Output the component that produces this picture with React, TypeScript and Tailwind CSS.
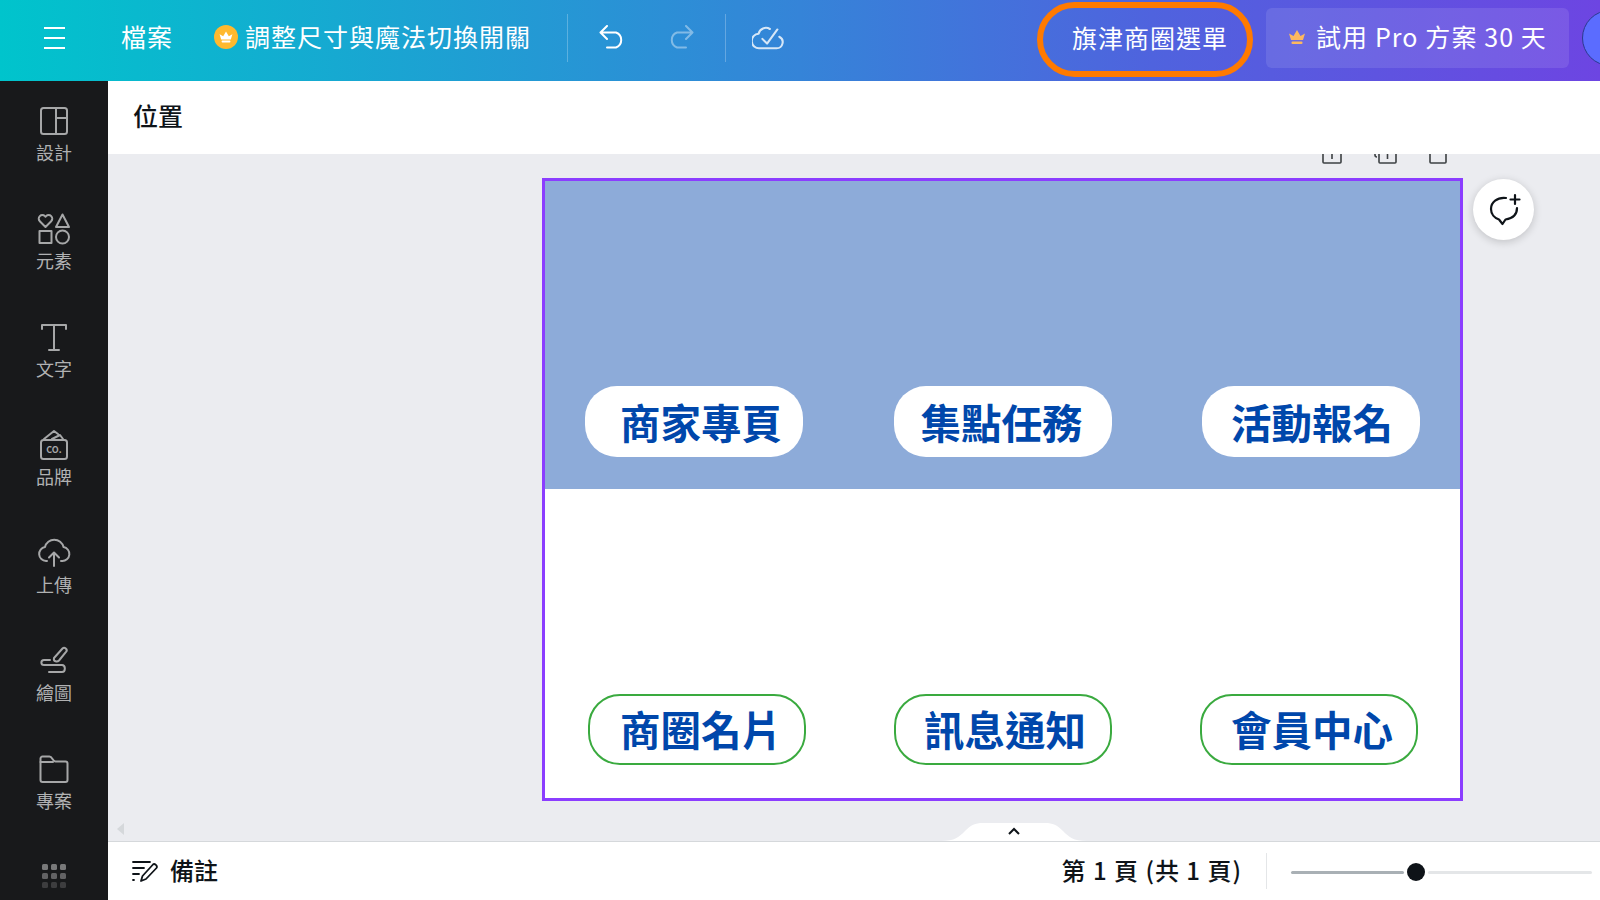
const navItems = [
  { label: "設計", icon: "layout" },
  { label: "元素", icon: "shapes" },
  { label: "文字", icon: "text" },
  { label: "品牌", icon: "brand" },
  { label: "上傳", icon: "upload" },
  { label: "繪圖", icon: "draw" },
  { label: "專案", icon: "folder" },
];

const NavIcon = ({ name }: { name: string }) => {
  const common = {
    width: 34,
    height: 34,
    viewBox: "0 0 34 34",
    fill: "none",
    stroke: "#a6a7a8",
    strokeWidth: 2,
    strokeLinecap: "round" as const,
    strokeLinejoin: "round" as const,
  };
  if (name === "layout")
    return (
      <svg {...common}>
        <rect x="4" y="4" width="26" height="26" rx="2.5" />
        <path d="M19 4v26M19 14h11" />
      </svg>
    );
  if (name === "shapes")
    return (
      <svg {...common}>
        <path d="M8.500 15 2.800 9.200a3.600 3.600 0 0 1 5.100-5.100l.6.6.6-.6a3.600 3.600 0 0 1 5.100 5.100z" />
        <path d="M25.500 2.500 32 15H19z" />
        <rect x="2.500" y="19" width="12" height="12" />
        <circle cx="25.500" cy="25" r="6.500" />
      </svg>
    );
  if (name === "text")
    return (
      <svg {...common}>
        <path d="M5 9V5h24v4M17 5v25M12 30h10" />
      </svg>
    );
  if (name === "brand")
    return (
      <svg {...common}>
        <rect x="4" y="12" width="26" height="19" rx="2.5" />
        <path d="M7 11 17 3l4 3M15 11l8-4 3 4" />
        <text x="17" y="25" textAnchor="middle" fontSize="9" fontWeight="700" fill="#a6a7a8" stroke="none">CO.</text>
      </svg>
    );
  if (name === "upload")
    return (
      <svg {...common}>
        <path d="M10 25H9a7 7 0 0 1-1-13.9 9.5 9.5 0 0 1 18.5 0A7 7 0 0 1 25 25h-1" />
        <path d="M17 30V17M12 21.5l5-5 5 5" />
      </svg>
    );
  if (name === "draw")
    return (
      <svg {...common}>
        <path d="m17 14 8.5-9.5c2-2 5.500.8 3.700 3.200L22 16.500c-1.500 1.500-6 1.500-5-2.500z" />
        <path d="M13 14H7c-3.500 0-3.500 5 0 5h18c3.800 0 3.800 7 0 7H12" transform="translate(0 2)" />
      </svg>
    );
  return (
    <svg {...common}>
      <path d="M3.500 9V6.500a2 2 0 0 1 2-2h7c1.500 0 2 .8 3 2.500s1.500 2.500 3 2.500h10a2 2 0 0 1 2 2V28a2 2 0 0 1-2 2h-23a2 2 0 0 1-2-2z" />
      <path d="M3.500 10H16" />
    </svg>
  );
};

const CrownGlyph = ({ color, size }: { color: string; size: number }) => (
  <svg width={size} height={size} viewBox="0 0 20 20" fill={color}>
    <path d="M4 13 2 6.500l4.500 2.500L10 3l3.500 6L18 6.500 16 13z" />
    <rect x="4.500" y="14.500" width="11" height="2.500" rx="1" />
  </svg>
);

const Pill = ({ label, outlined, pad }: { label: string; outlined?: boolean; pad: string }) => (
  <div
    className={`flex h-[71px] w-[218px] items-center rounded-[32px] text-[40.5px] leading-none font-bold text-[#0047ab] ${pad} ${
      outlined ? "border-2 border-[#3aaa3f] bg-white" : "bg-white pt-[2px]"
    }`}
  >
    {label}
  </div>
);

export default function App() {
  return (
    <div className="flex h-[900px] w-[1600px] flex-col overflow-hidden bg-[#ebecf0] font-['Noto_Sans_CJK_TC','Noto_Sans',sans-serif]">
      <header className="flex h-[81px] shrink-0 items-center overflow-hidden bg-[linear-gradient(90deg,#00c4cc_0%,#3584d8_50%,#4f63de_72%,#6d45e2_100%)] pb-[8px] text-[25px] tracking-[1px] text-white">
        <div className="mt-[2px] flex w-[108px] shrink-0 flex-col items-center gap-[8px]">
          <span className="h-[2px] w-[21px] bg-white" />
          <span className="h-[2px] w-[21px] bg-white" />
          <span className="h-[2px] w-[21px] bg-white" />
        </div>
        <span className="ml-[13px]">檔案</span>
        <div className="ml-[41px] flex h-[24px] w-[24px] items-center justify-center rounded-full bg-[#ffb92e]">
          <CrownGlyph color="#ffffff" size={16} />
        </div>
        <span className="ml-[7px]">調整尺寸與魔法切換開關</span>
        <div className="mt-[2px] ml-[36px] h-[48px] w-px bg-white/25" />
        <svg className="ml-[31px]" width="28" height="24" viewBox="0 0 28 24" fill="none" stroke="#ffffff" strokeWidth="2" strokeLinecap="round" strokeLinejoin="round">
          <path d="M8 1 1.500 7.500 8 14M2 7.500h15a8 8 0 0 1 0 15H8" />
        </svg>
        <svg className="ml-[39px] opacity-40" width="28" height="24" viewBox="0 0 28 24" fill="none" stroke="#ffffff" strokeWidth="2" strokeLinecap="round" strokeLinejoin="round">
          <path d="M20 1l6.500 6.500L20 14M26 7.500H11a8 8 0 0 0 0 15h9" />
        </svg>
        <div className="mt-[2px] ml-[31px] h-[48px] w-px bg-white/25" />
        <svg className="ml-[26px]" width="32" height="28" viewBox="0 0 34 28" fill="none" stroke="#ffffff" strokeOpacity="0.8" strokeWidth="2.200" strokeLinecap="round" strokeLinejoin="round">
          <path d="M19 5.500A8 8 0 0 0 7 10.500 7.500 7.500 0 0 0 8 26h18a6.500 6.500 0 0 0 3-12.300" />
          <path d="m11 16 5 5 11-15" />
        </svg>
        <div className="mt-[2px] ml-auto flex h-[75px] w-[216px] shrink-0 items-center justify-center self-start rounded-full border-[6px] border-[#ff7a00] pb-[4px] pl-[10px] tracking-[1px]">
          旗津商圈選單
        </div>
        <div className="mt-[8px] ml-[13px] flex h-[60px] w-[303px] shrink-0 items-center self-start rounded-[6px] bg-white/10 pb-[2px] pl-[21px] tracking-[1.1px]">
          <CrownGlyph color="#fdb85f" size={20} />
          <span className="ml-[9px] whitespace-nowrap">試用 Pro 方案 30 天</span>
        </div>
        <div className="mt-[10px] mr-[-38px] ml-[13px] h-[56px] w-[56px] shrink-0 self-start rounded-full border border-[#2b3a8f] bg-[#5b6cff]" />
      </header>

      <div className="flex min-h-0 flex-1">
        <aside className="flex w-[108px] shrink-0 flex-col bg-[#18191b]">
          {navItems.map((item) => (
            <div key={item.label} className="flex h-[108px] shrink-0 flex-col items-center pt-[23px]">
              <NavIcon name={item.icon} />
              <span className="mt-[2px] text-[18px] leading-[24px] text-[#b0b1b2]">{item.label}</span>
            </div>
          ))}
          <div className="mt-[27px] grid w-[24px] grid-cols-3 gap-[3px] self-center">
            {[0.42, 0.42, 0.42, 0.32, 0.32, 0.32, 0.16, 0.16, 0.16].map((o, i) => (
              <span key={i} className="h-[6px] w-[6px] rounded-[1.500px] bg-white" style={{ opacity: o }} />
            ))}
          </div>
        </aside>

        <main className="flex min-w-0 flex-1 flex-col">
          <div className="flex h-[73px] shrink-0 items-center bg-white pb-[3px] pl-[25px] text-[25px] font-medium text-[#0e1318]">位置</div>

          <div className="relative min-h-0 flex-1 bg-[#ebecf0]">
            <div className="relative ml-[434px] w-[921px]">
              <div className="flex h-[10px] items-end justify-end gap-[32px] overflow-hidden pr-[16px]">
                <svg width="20" height="10" viewBox="0 0 20 10" fill="none" stroke="#3c4043" strokeWidth="1.600">
                  <path d="M1 0v8a1 1 0 0 0 1 1h16a1 1 0 0 0 1-1V0M10 0v5" />
                </svg>
                <svg width="23" height="10" viewBox="0 0 23 10" fill="none" stroke="#3c4043" strokeWidth="1.600">
                  <path d="M1 0v1a2 2 0 0 0 2 2M5 0v8a1 1 0 0 0 1 1h15a1 1 0 0 0 1-1V0M13.500 0v5" />
                </svg>
                <svg width="18" height="10" viewBox="0 0 18 10" fill="none" stroke="#3c4043" strokeWidth="1.600">
                  <path d="M1 0v8a1 1 0 0 0 1 1h14a1 1 0 0 0 1-1V0" />
                </svg>
              </div>

              <section className="mt-[14px] flex h-[623px] flex-col border-[3px] border-[#8b3dff] bg-white">
                <div className="flex h-[308px] shrink-0 items-end justify-between bg-[#8dabd9] pr-[40px] pb-[32px] pl-[40px]">
                  <Pill label="商家專頁" pad="pl-[35px]" />
                  <Pill label="集點任務" pad="pl-[27px]" />
                  <Pill label="活動報名" pad="pl-[29px]" />
                </div>
                <div className="flex flex-1 items-end justify-between pr-[42px] pb-[33px] pl-[43px]">
                  <Pill label="商圈名片" outlined pad="pl-[30px]" />
                  <Pill label="訊息通知" outlined pad="pl-[28px]" />
                  <Pill label="會員中心" outlined pad="pl-[29px]" />
                </div>
              </section>

              <button className="absolute top-[25px] right-[-71px] flex h-[61px] w-[61px] items-center justify-center rounded-full bg-white shadow-[0_2px_8px_rgba(0,0,0,0.18)]">
                <svg width="34" height="34" viewBox="0 0 34 34" fill="none" stroke="#0e1318" strokeWidth="2.200" strokeLinecap="round" strokeLinejoin="round">
                  <path d="M19 5C10 4 4 9.500 4 16c0 5 3.500 9 8 10.500l3.500 4.500 3-4.500C25 25.500 30 22 30 15" />
                  <path d="M28 2v9M23.500 6.500h9" />
                </svg>
              </button>
            </div>

            <svg className="absolute bottom-[6px] left-[9px]" width="8" height="12" viewBox="0 0 8 12" fill="#d5d8db">
              <path d="M7 0v12L0 6z" />
            </svg>

            <svg className="absolute right-[513px] bottom-0" width="146" height="18" viewBox="0 0 146 18" fill="#ffffff">
              <path d="M0 18c14 0 18-4 24-10C30 2 34 0 42 0h62c8 0 12 2 18 8 6 6 10 10 24 10z" />
              <path d="m68 11 5-5 5 5" fill="none" stroke="#0e1318" strokeWidth="2" />
            </svg>
          </div>

          <footer className="flex h-[59px] shrink-0 items-center border-t border-[#d5d8db] bg-white pl-[24px] text-[#0e1318]">
            <svg width="28" height="24" viewBox="0 0 28 24" fill="none" stroke="#0e1318" strokeWidth="1.800" strokeLinecap="round" strokeLinejoin="round">
              <path d="M1 3h17M1 9h11M1 15h6M1 21h1" />
              <path d="m9 22 1.500-5L21 5.500c1.500-1.500 5 1.500 3.500 3.500L14 20z" />
            </svg>
            <span className="ml-[10px] pb-[3px] text-[24px] font-medium">備註</span>
            <span className="ml-auto pb-[2px] text-[24px] font-medium tracking-[1px]">第 1 頁 (共 1 頁)</span>
            <div className="ml-[24px] h-[36px] w-px bg-[#e4e6e8]" />
            <div className="mt-[2px] ml-[24px] flex w-[301px] shrink-0 items-center">
              <div className="h-[3px] w-[113px] rounded-full bg-[#a9b0b5]" />
              <div className="mx-[3px] h-[18px] w-[18px] shrink-0 rounded-full bg-[#0e1318]" />
              <div className="h-[3px] flex-1 rounded-full bg-[#e4e6e8]" />
            </div>
            <div className="w-[8px] shrink-0" />
          </footer>
        </main>
      </div>
    </div>
  );
}
